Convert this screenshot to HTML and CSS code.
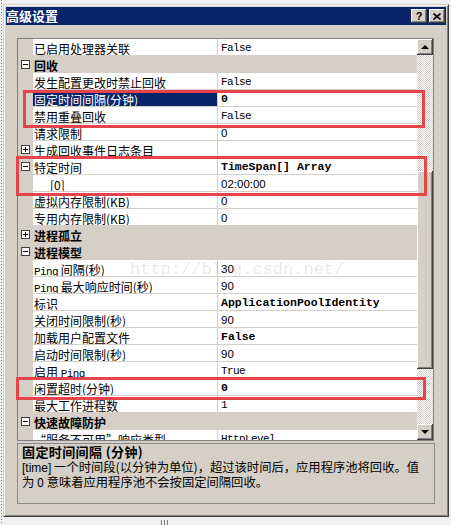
FILE: index.html
```html
<!DOCTYPE html>
<html lang="zh-CN">
<head>
    <meta charset="UTF-8">
    <title>高级设置</title>
    <link rel="stylesheet" href="styles.css">
</head>
<body>
    <div class="window">
        <div class="titlebar">
            <span class="title">高级设置</span>
            <div class="title-btns">
                <span class="tbtn">?</span>
                <span class="tbtn"><svg width="8" height="7" viewBox="0 0 8 7"><path d="M0.5 0.5L7.5 6.5M7.5 0.5L0.5 6.5" stroke="#000" stroke-width="1.6"/></svg></span>
            </div>
        </div>

        <div class="client">
            <div class="grid-wrap">
                <div class="grid">
                    <div class="rows">
                        <div class="row"><span class="gut"></span><span class="name">已启用处理器关联</span><span class="val mono">False</span></div>
                        <div class="row cat"><span class="gut"><i class="box"></i></span><span class="name">回收</span><span class="val"></span></div>
                        <div class="row"><span class="gut"></span><span class="name">发生配置更改时禁止回收</span><span class="val mono">False</span></div>
                        <div class="row sel"><span class="gut"></span><span class="name">固定时间间隔(分钟)</span><span class="val bold">0</span></div>
                        <div class="row"><span class="gut"></span><span class="name">禁用重叠回收</span><span class="val mono">False</span></div>
                        <div class="row"><span class="gut"></span><span class="name">请求限制</span><span class="val num">0</span></div>
                        <div class="row"><span class="gut"><i class="box plus"></i></span><span class="name">生成回收事件日志条目</span><span class="val"></span></div>
                        <div class="row"><span class="gut"><i class="box"></i></span><span class="name">特定时间</span><span class="val bold">TimeSpan[] Array</span></div>
                        <div class="row"><span class="gut"></span><span class="name sub">[0]</span><span class="val num">02:00:00</span></div>
                        <div class="row"><span class="gut"></span><span class="name">虚拟内存限制(KB)</span><span class="val num">0</span></div>
                        <div class="row"><span class="gut"></span><span class="name">专用内存限制(KB)</span><span class="val num">0</span></div>
                        <div class="row cat"><span class="gut"><i class="box plus"></i></span><span class="name">进程孤立</span><span class="val"></span></div>
                        <div class="row cat"><span class="gut"><i class="box"></i></span><span class="name">进程模型</span><span class="val"></span></div>
                        <div class="row"><span class="gut"></span><span class="name"><span class="mono">Ping</span> 间隔(秒)</span><span class="val num">30</span></div>
                        <div class="row"><span class="gut"></span><span class="name"><span class="mono">Ping</span> 最大响应时间(秒)</span><span class="val num">90</span></div>
                        <div class="row"><span class="gut"></span><span class="name">标识</span><span class="val bold">ApplicationPoolIdentity</span></div>
                        <div class="row"><span class="gut"></span><span class="name">关闭时间限制(秒)</span><span class="val num">90</span></div>
                        <div class="row"><span class="gut"></span><span class="name">加载用户配置文件</span><span class="val bold">False</span></div>
                        <div class="row"><span class="gut"></span><span class="name">启动时间限制(秒)</span><span class="val num">90</span></div>
                        <div class="row"><span class="gut"></span><span class="name">启用 <span class="mono">Ping</span></span><span class="val mono">True</span></div>
                        <div class="row"><span class="gut"></span><span class="name">闲置超时(分钟)</span><span class="val bold">0</span></div>
                        <div class="row"><span class="gut"></span><span class="name">最大工作进程数</span><span class="val mono">1</span></div>
                        <div class="row cat"><span class="gut"><i class="box"></i></span><span class="name">快速故障防护</span><span class="val"></span></div>
                        <div class="row"><span class="gut"></span><span class="name">“服务不可用”响应类型</span><span class="val mono">HttpLevel</span></div>
                    </div>
                    <div class="scroll">
                        <div class="sbtn"><i class="arrow up"></i></div>
                        <div class="track"><div class="thumb"></div></div>
                        <div class="sbtn"><i class="arrow down"></i></div>
                    </div>
                </div>

                <div class="watermark">http://blog.csdn.net/</div>
                <div class="mark mark-1"></div>
                <div class="mark mark-2"></div>
                <div class="mark mark-3"></div>
            </div>

            <div class="desc">
                <div class="desc-title">固定时间间隔 (分钟)</div>
                <p class="desc-text"><span class="tag">[time]</span> 一个时间段(以分钟为单位)，超过该时间后，应用程序池将回收。值为 0 意味着应用程序池不会按固定间隔回收。</p>
            </div>
        </div>
    </div>

    <div class="statusbar"><span class="grip"></span></div>
</body>
</html>
```

FILE: styles.css
```css
body { margin: 0; width: 451px; height: 525px; overflow: hidden; font-family: "Noto Sans CJK SC", sans-serif; font-size: 12px; color: #000; background: repeating-linear-gradient(#808080 0 1px, transparent 1px 3px) 1px 0 / 1px 100% no-repeat, #f0f0f0; }

.window { margin: 4px 2px 0 3px; height: 507px; padding: 2px; background: #d4d0c8; border: 1px solid; border-color: #d4d0c8 #404040 #404040 #d4d0c8; box-shadow: inset 1px 1px #fff, inset -1px -1px #808080; }

.titlebar { height: 18px; background: #0a246a; display: flex; align-items: center; justify-content: space-between; padding: 0 1px 0 0; }
.title { color: #fff; font-weight: bold; font-size: 13px; line-height: 18px; }
.title-btns { display: flex; gap: 2px; }
.tbtn { width: 16px; height: 14px; display: flex; align-items: center; justify-content: center; background: #d4d0c8; font-family: "Liberation Sans", sans-serif; font-weight: bold; font-size: 11px; box-shadow: inset -1px -1px #404040, inset 1px 1px #fff, inset -2px -2px #808080; }

.client { padding: 13px 0 0 11px; }
.grid-wrap { position: relative; width: 417px; }
.grid { display: flex; height: 403px; box-sizing: border-box; border: 1px solid #7f7f7f; background: #fff; }
.rows { width: 399px; height: 401px; overflow: hidden; }

.row { display: grid; grid-template-columns: 15px 185px 199px; height: 17px; }
.gut { background: #d4d0c8; display: flex; align-items: center; justify-content: center; }
.name { background: #fff; border-right: 1px solid #d4d0c8; border-bottom: 1px solid #d4d0c8; padding-left: 1px; line-height: 19px; white-space: nowrap; overflow: hidden; }
.val { background: #fff; border-bottom: 1px solid #d4d0c8; padding-left: 3px; line-height: 18px; white-space: nowrap; overflow: hidden; }
.name.sub { padding-left: 17px; }
.cat .name, .cat .val { background: #d4d0c8; border-color: #d4d0c8; font-weight: bold; }
.sel .name { background: #0a246a; color: #fff; }

.mono { font-family: "Liberation Mono", monospace; font-size: 11px; letter-spacing: -0.6px; }
.bold { font-family: "Liberation Mono", monospace; font-size: 11.5px; font-weight: bold; }
.num { font-family: "Liberation Sans", sans-serif; font-size: 11.5px; }

.box { position: relative; width: 7px; height: 7px; border: 1px solid #404040; background: #fff; }
.box::before { content: ""; position: absolute; left: 1px; top: 3px; width: 5px; height: 1px; background: #000; }
.box.plus::after { content: ""; position: absolute; left: 3px; top: 1px; width: 1px; height: 5px; background: #000; }

.scroll { width: 16px; display: flex; flex-direction: column; }
.sbtn { height: 16px; display: flex; align-items: center; justify-content: center; background: #d4d0c8; box-shadow: inset -1px -1px #404040, inset 1px 1px #fff, inset -2px -2px #808080; }
.arrow { width: 0; height: 0; border-left: 4px solid transparent; border-right: 4px solid transparent; }
.arrow.up { border-bottom: 4px solid #000; }
.arrow.down { border-top: 4px solid #000; }
.track { flex: 1; background: repeating-conic-gradient(#fff 0 25%, #d4d0c8 0 50%) 0 0 / 2px 2px; }
.thumb { margin-top: 116px; height: 198px; background: #d4d0c8; box-shadow: inset -1px -1px #404040, inset 1px 1px #fff, inset -2px -2px #808080; }

.watermark { position: absolute; left: 113px; top: 222px; font-family: "Liberation Mono", monospace; font-size: 17px; color: rgba(110, 110, 110, 0.16); pointer-events: none; }
.mark { position: absolute; box-sizing: border-box; border: 3px solid #e6434a; }
.mark-1 { left: 6px; top: 52px; width: 402px; height: 38px; }
.mark-2 { left: -1px; top: 118px; width: 411px; height: 40px; }
.mark-3 { left: -1px; top: 339px; width: 410px; height: 23px; }

.desc { width: 418px; height: 61px; margin-top: 2px; box-sizing: border-box; border: 1px solid #8a8a8a; padding: 0 6px 0 4px; }
.desc-title { font-weight: bold; font-size: 13px; line-height: 16px; letter-spacing: 0.4px; }
.desc-text { margin: 0; line-height: 14px; font-size: 12.3px; }
.tag { font-family: "Liberation Sans", sans-serif; font-size: 12px; }

.statusbar { height: 8px; position: relative; }
.grip { position: absolute; left: 161px; top: 3px; width: 7px; height: 5px; background: repeating-linear-gradient(90deg, #808080 0 1px, transparent 1px 3px); }
```
